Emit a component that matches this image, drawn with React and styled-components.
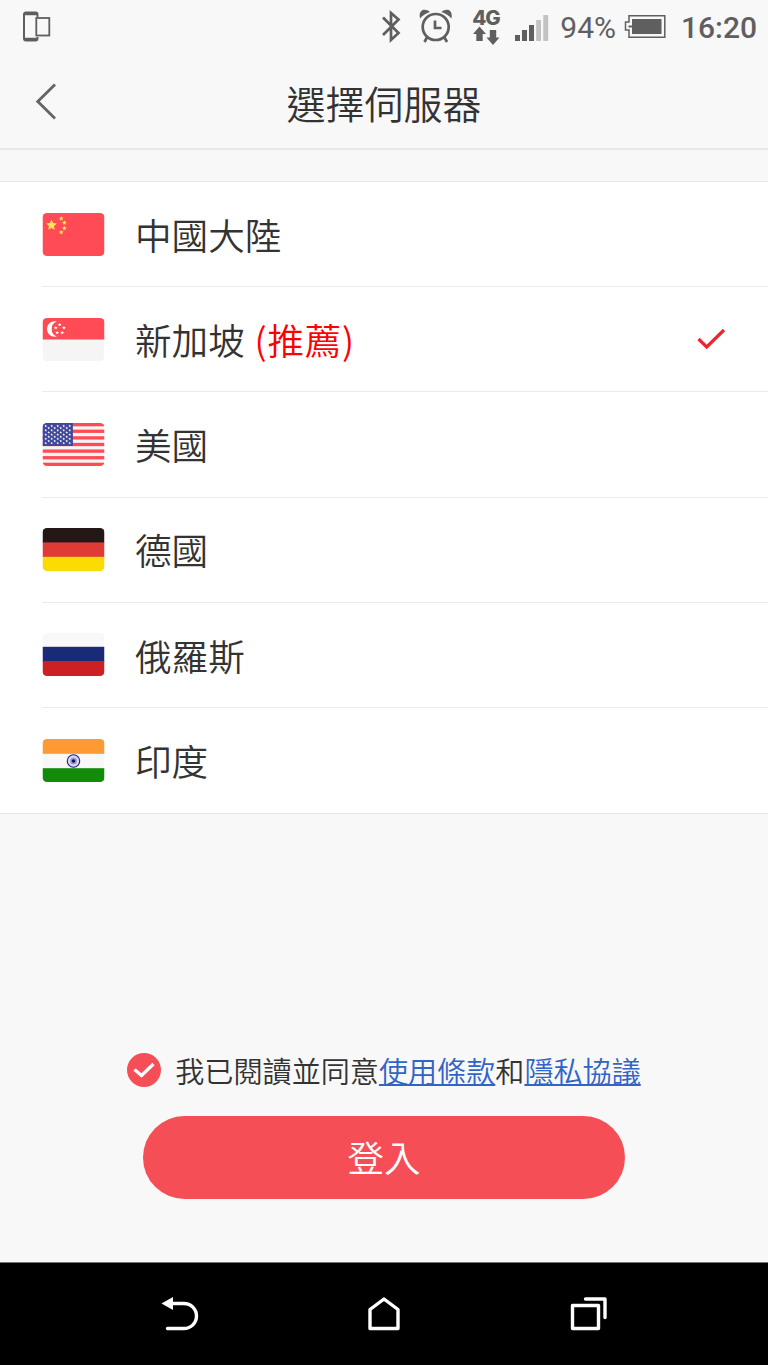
import React from 'react';
import styled, { createGlobalStyle } from 'styled-components';

const cjk = '"Noto Sans CJK TC", "Noto Sans", sans-serif';
const ink = '#5f5f5f';

const GlobalStyle = createGlobalStyle`
  * { box-sizing: border-box; }
  body { margin: 0; background: #f8f8f8; }
  svg { display: block; flex: none; }
`;

const Screen = styled.div`
  width: 768px;
  height: 1365px;
  display: flex;
  flex-direction: column;
  overflow: hidden;
  background: #f8f8f8;
  color: #333;
  font-family: ${cjk};
  font-weight: 350;
`;

const StatusBar = styled.div`
  height: 56px;
  flex: none;
  display: flex;
  align-items: flex-start;
  padding: 0 11px 0 19px;
  color: ${ink};
`;

const StatusIcon = styled.svg`
  margin-left: ${(p) => p.$gap || 0}px;
`;

const Spacer = styled.div`
  flex: 1;
`;

const Network = styled.div`
  width: 30px;
  margin-left: 19px;
  padding-top: 6px;
  display: flex;
  flex-direction: column;
  align-items: center;
`;

const NetworkLabel = styled.span`
  height: 20px;
  font: 800 20.5px/24px Inter, sans-serif;
  letter-spacing: -1px;
`;

const StatusText = styled.span`
  width: ${(p) => p.$width}px;
  font: ${(p) => p.$weight} ${(p) => p.$size}px/56px Roboto, sans-serif;
  white-space: nowrap;
  text-align: right;
`;

const Header = styled.header`
  height: 94px;
  flex: none;
  display: grid;
  grid-template-columns: 90px 1fr 90px;
  border-bottom: 2px solid #e9e9e9;
`;

const BackButton = styled.button`
  border: 0;
  background: none;
  padding: 26px 0 0 33px;
  align-self: start;
`;

const Title = styled.h1`
  margin: 0;
  text-align: center;
  font-size: 39px;
  font-weight: 350;
  line-height: 92px;
  font-family: ${cjk};
`;

const ServerList = styled.ul`
  list-style: none;
  margin: 31px 0 0;
  padding: 0;
  flex: none;
  background: #fff;
  border-top: 1px solid #e8e8e8;
  border-bottom: 1px solid #e8e8e8;
`;

const ServerRow = styled.li`
  height: 105.2px;
  margin-left: 42px;
  padding: 0 42px 0 0;
  display: flex;
  align-items: center;
  border-bottom: ${(p) => (p.$last ? '0' : '1px solid #ebebeb')};
`;

const ServerName = styled.span`
  flex: 1;
  margin-left: 30px;
  padding-top: 1.6px;
  font-size: 36.6px;
  line-height: 50px;
`;

const Recommended = styled.span`
  margin-left: 1px;
  color: #f00;
  letter-spacing: 0.7px;
`;

const Footer = styled.footer`
  flex: 1;
  display: flex;
  flex-direction: column;
  align-items: center;
  justify-content: flex-end;
  padding-bottom: 63.5px;
`;

const Agreement = styled.div`
  display: flex;
  align-items: center;
  height: 40px;
  margin-bottom: 26px;
  gap: 14px;
`;

const AgreementText = styled.span`
  font-size: 29.1px;
  line-height: 40px;
  white-space: nowrap;
`;

const Link = styled.a`
  color: #3163c8;
  text-decoration: underline;
  text-decoration-thickness: 2px;
  text-underline-offset: 1px;
  text-decoration-skip-ink: none;
`;

const LoginButton = styled.button`
  width: 482px;
  height: 83px;
  border: 0;
  border-radius: 42px;
  padding: 0;
  background: #f54e57;
  color: #fff;
  font-family: ${cjk};
  font-size: 36.5px;
  font-weight: 350;
  line-height: 80px;
`;

const NavBar = styled.nav`
  height: 103px;
  flex: none;
  display: flex;
  align-items: center;
  justify-content: space-between;
  padding: 0 160px;
  background: #000;
  border-top: 1px solid #777;
`;

const star = (cx, cy, r) =>
  Array.from({ length: 10 }, (_, i) => {
    const a = -Math.PI / 2 + (i * Math.PI) / 5;
    const q = i % 2 ? r * 0.48 : r;
    return `${(cx + q * Math.cos(a)).toFixed(2)},${(cy + q * Math.sin(a)).toFixed(2)}`;
  }).join(' ');

const Star = ({ x, y, r, fill }) => <polygon points={star(x, y, r)} fill={fill} />;

const flagArt = {
  cn: (
    <>
      <rect width="62" height="43" fill="#ff4b55" />
      <Star x={9} y={12.2} r={5.6} fill="#ffe15a" />
      <Star x={18.7} y={5.5} r={2.5} fill="#ffe15a" />
      <Star x={21.9} y={9.8} r={2.5} fill="#ffe15a" />
      <Star x={21.9} y={15.2} r={2.5} fill="#ffe15a" />
      <Star x={18.7} y={19.3} r={2.5} fill="#ffe15a" />
    </>
  ),
  sg: (
    <>
      <rect width="62" height="43" fill="#f5f5f5" />
      <rect width="62" height="21.5" fill="#ff4b55" />
      <path d="M14.3 3.6A7.7 7.7 0 1 0 14.3 18.4A7.9 7.9 0 0 1 14.3 3.6Z" fill="#fff" />
      <Star x={17.2} y={6.7} r={1.9} fill="#fff" />
      <Star x={13.2} y={9.8} r={1.9} fill="#fff" />
      <Star x={21.4} y={9.8} r={1.9} fill="#fff" />
      <Star x={14.7} y={14.7} r={1.9} fill="#fff" />
      <Star x={19.7} y={14.7} r={1.9} fill="#fff" />
    </>
  ),
  us: (
    <>
      <rect width="62" height="43" fill="#f5f5f5" />
      {[0, 1, 2, 3, 4, 5, 6].map((i) => (
        <rect key={i} y={(i * 2 * 43) / 13} width="62" height={43 / 13} fill="#ff4b55" />
      ))}
      <rect width="30.4" height="23" fill="#41479b" />
      {Array.from({ length: 9 }, (_, r) =>
        Array.from({ length: r % 2 ? 4 : 5 }, (_, c) => (
          <Star key={`${r}-${c}`} x={3.2 + c * 6 + (r % 2) * 3} y={3 + r * 2.15} r={1.4} fill="#f5f5f5" />
        ))
      )}
    </>
  ),
  de: (
    <>
      <rect width="62" height="15" fill="#231815" />
      <rect y="14.4" width="62" height="15" fill="#e03a36" />
      <rect y="28.8" width="62" height="14.2" fill="#fcdb00" />
    </>
  ),
  ru: (
    <>
      <rect width="62" height="15" fill="#f8f8f8" />
      <rect y="13.8" width="62" height="15" fill="#192b77" />
      <rect y="28" width="62" height="15" fill="#cb2123" />
    </>
  ),
  in: (
    <>
      <rect width="62" height="43" fill="#f8f8f8" />
      <rect width="62" height="14.8" fill="#ff9934" />
      <rect y="29.2" width="62" height="13.8" fill="#138a08" />
      <circle cx="31" cy="22" r="6.2" fill="#dcdcee" stroke="#1c1c80" strokeWidth="1.1" />
      <circle cx="31" cy="22" r="3.5" fill="#9a9acb" />
      <circle cx="31" cy="22" r="1.8" fill="#10107a" />
    </>
  ),
};

const Flag = ({ code }) => (
  <svg width="63" height="43" viewBox="-0.5 0 63 43">
    <clipPath id={`flag-${code}`}>
      <rect width="62" height="43" rx="4.5" />
    </clipPath>
    <g clipPath={`url(#flag-${code})`}>{flagArt[code]}</g>
  </svg>
);

const servers = [
  { code: 'cn', name: '中國大陸' },
  { code: 'sg', name: '新加坡', recommended: true },
  { code: 'us', name: '美國' },
  { code: 'de', name: '德國' },
  { code: 'ru', name: '俄羅斯' },
  { code: 'in', name: '印度' },
];

export default function App() {
  return (
    <Screen>
      <GlobalStyle />
      <StatusBar>
        <StatusIcon width="32" height="48" fill="none" stroke={ink}>
          <path d="M18.5 17V14.5Q18.5 12.5 16.5 12.5H7Q5 12.5 5 14.5V38.5Q5 40.5 7 40.5H16.5Q18.5 40.5 18.5 38.5V37" strokeWidth="2" />
          <path d="M6 13.6H18M6 39.4H18" strokeWidth="3.4" />
          <rect x="17.3" y="18" width="13" height="17.5" strokeWidth="1.8" />
        </StatusIcon>
        <Spacer />
        <StatusIcon width="22" height="48" fill="none" stroke={ink} strokeWidth="2.7">
          <path d="M4 17.5L19.5 33L12 40V13L19.5 19.5L4 35" />
        </StatusIcon>
        <StatusIcon $gap={17} width="34" height="48" fill="none" stroke={ink} strokeWidth="2.7">
          <circle cx="17.7" cy="27" r="13" />
          <path d="M17 20.5V28H23.5M9.2 37L6.5 42M26.2 37L29 42" />
          <path d="M2 18.5C0 9 7.5 8 12 12Q5.5 14 2 18.5ZM33.4 18.5C35.4 9 27.9 8 23.4 12Q29.9 14 33.4 18.5Z" fill={ink} stroke="none" />
        </StatusIcon>
        <Network>
          <NetworkLabel>4G</NetworkLabel>
          <svg width="28" height="19" fill={ink}>
            <path d="M7.5 .5L14 8H10.7V15H4.3V8H1ZM21 19L27.5 11.5H24.2V4H17.8V11.5H14.5Z" />
          </svg>
        </Network>
        <StatusIcon $gap={13} width="36" height="48" fill={ink}>
          <path d="M1 35H6V41H1ZM8 30H13V41H8ZM15 25H20V41H15Z" />
          <path d="M22.2 20H27V41H22.2ZM29.3 15H34.2V41H29.3Z" fill="#c3c3c3" />
        </StatusIcon>
        <StatusText $width={66} $weight={400} $size={30}>94%</StatusText>
        <StatusIcon $gap={8} width="42" height="48" fill="none" stroke={ink} strokeWidth="1.5">
          <path d="M5 15.7H40.8V37.3H5V30H1.5V22H5Z" />
          <path d="M8 19H37.5V34H8V27.5H4.5V25.5H8Z" fill={ink} stroke="none" />
        </StatusIcon>
        <StatusText $width={91} $weight={500} $size={30}>16:20</StatusText>
      </StatusBar>

      <Header>
        <BackButton aria-label="返回">
          <svg width="26" height="40" fill="none" stroke="#666" strokeWidth="2.9">
            <path d="M22 2.5L4.8 19.5L22 36.5" />
          </svg>
        </BackButton>
        <Title>選擇伺服器</Title>
      </Header>

      <ServerList>
        {servers.map((s, i) => (
          <ServerRow key={s.code} $last={i === servers.length - 1}>
            <Flag code={s.code} />
            <ServerName>
              {s.name}
              {s.recommended && <Recommended> (推薦)</Recommended>}
            </ServerName>
            {s.recommended && (
              <svg width="30" height="24" fill="none" stroke="#ee2430" strokeWidth="3.2">
                <path d="M2.5 12L10.7 20L28 3" />
              </svg>
            )}
          </ServerRow>
        ))}
      </ServerList>

      <Footer>
        <Agreement>
          <svg width="34" height="34" viewBox="0 0 34 34" fill="none">
            <circle cx="17" cy="17" r="17" fill="#f54e57" />
            <path d="M7.5 16.5L14.5 22.5L26.5 11" stroke="#fff" strokeWidth="3.2" />
          </svg>
          <AgreementText>
            我已閱讀並同意<Link>使用條款</Link>和<Link>隱私協議</Link>
          </AgreementText>
        </Agreement>
        <LoginButton>登入</LoginButton>
      </Footer>

      <NavBar>
        <svg width="40" height="40" fill="none" stroke="#fff" strokeWidth="3.4" strokeLinecap="round">
          <path d="M10 9.5H24A12.5 12.5 0 0 1 24 34.5H7.5" />
          <path d="M1.5 9.5L13 3V16Z" fill="#fff" stroke="none" />
        </svg>
        <svg width="40" height="40" fill="none" stroke="#fff" strokeWidth="3.4" strokeLinejoin="round">
          <path d="M6 34.5V15.5L20 5L34 15.5V34.5Z" />
        </svg>
        <svg width="40" height="40" fill="none" stroke="#fff" strokeWidth="3.4" strokeLinejoin="round" strokeLinecap="round">
          <rect x="4.5" y="11.5" width="26" height="23" />
          <path d="M17.5 5H37V23.5" />
        </svg>
      </NavBar>
    </Screen>
  );
}
